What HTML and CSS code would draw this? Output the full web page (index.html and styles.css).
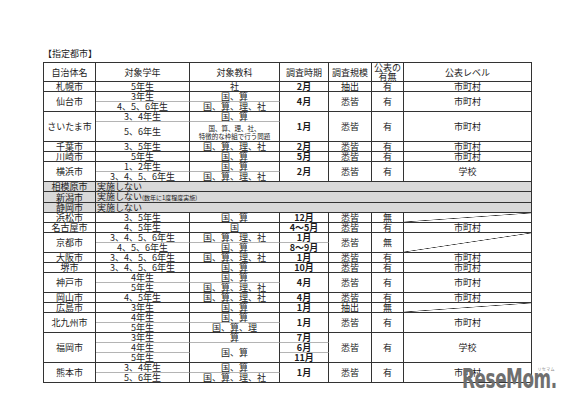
FILE: index.html
```html
<!DOCTYPE html>
<html lang="ja">
<head>
<meta charset="utf-8">
<link rel="stylesheet" href="styles.css">
</head>
<body>
<div class="page">
  <p class="title">【指定都市】</p>
  <table class="grid">
    <colgroup>
      <col class="c1"><col class="c2"><col class="c3"><col class="c4"><col class="c5"><col class="c6"><col class="c7">
    </colgroup>
    <tr class="head">
      <th>自治体名</th><th>対象学年</th><th>対象教科</th><th>調査時期</th><th>調査規模</th><th>公表の<br>有無</th><th>公表レベル</th>
    </tr>
    <tr><td>札幌市</td><td>5年生</td><td>社</td><td class="b">2月</td><td>抽出</td><td>有</td><td>市町村</td></tr>

    <tr><td rowspan="2">仙台市</td><td class="s">3年生</td><td class="s">国、算</td><td rowspan="2" class="b">4月</td><td rowspan="2">悉皆</td><td rowspan="2">有</td><td rowspan="2">市町村</td></tr>
    <tr><td>4、5、6年生</td><td>国、算、理、社</td></tr>

    <tr><td rowspan="2">さいたま市</td><td class="s">3、4年生</td><td class="s">国、算</td><td rowspan="2" class="b">1月</td><td rowspan="2">悉皆</td><td rowspan="2">有</td><td rowspan="2">市町村</td></tr>
    <tr class="tall"><td>5、6年生</td><td class="small">国、算、理、社、<br>特徴的な枠組で行う問題</td></tr>

    <tr><td>千葉市</td><td>3、5年生</td><td>国、算、理、社</td><td class="b">2月</td><td>悉皆</td><td>有</td><td>市町村</td></tr>
    <tr><td>川崎市</td><td>5年生</td><td>国、算</td><td class="b">5月</td><td>悉皆</td><td>有</td><td>市町村</td></tr>

    <tr><td rowspan="2">横浜市</td><td class="s">1、2年生</td><td class="s">国、算</td><td rowspan="2" class="b">2月</td><td rowspan="2">悉皆</td><td rowspan="2">有</td><td rowspan="2">学校</td></tr>
    <tr><td>3、4、5、6年生</td><td>国、算、理、社</td></tr>

    <tr class="gray"><td>相模原市</td><td colspan="6" class="left">実施しない</td></tr>
    <tr class="gray"><td>新潟市</td><td colspan="6" class="left">実施しない<span class="note">(数年に1度程度実施)</span></td></tr>
    <tr class="gray"><td>静岡市</td><td colspan="6" class="left">実施しない</td></tr>

    <tr><td>浜松市</td><td>3、5年生</td><td>国、算</td><td class="b">12月</td><td>悉皆</td><td>無</td><td class="diag"></td></tr>
    <tr><td>名古屋市</td><td>4、5年生</td><td>国</td><td class="b">4〜5月</td><td>悉皆</td><td>有</td><td>市町村</td></tr>

    <tr><td rowspan="2">京都市</td><td class="s">3、4、5、6年生</td><td class="s">国、算、理、社</td><td class="s b">1月</td><td rowspan="2">悉皆</td><td rowspan="2">無</td><td rowspan="2" class="diag"></td></tr>
    <tr><td>4、5、6年生</td><td>国、算</td><td class="b">8〜9月</td></tr>

    <tr><td>大阪市</td><td>3、4、5、6年生</td><td>国、算、理、社</td><td class="b">1月</td><td>悉皆</td><td>有</td><td>市町村</td></tr>
    <tr><td>堺市</td><td>3、4、5、6年生</td><td>国、算</td><td class="b">10月</td><td>悉皆</td><td>有</td><td>市町村</td></tr>

    <tr><td rowspan="2">神戸市</td><td class="s">4年生</td><td class="s">国、算</td><td rowspan="2" class="b">4月</td><td rowspan="2">悉皆</td><td rowspan="2">有</td><td rowspan="2">市町村</td></tr>
    <tr><td>5年生</td><td>国、算、理、社</td></tr>

    <tr><td>岡山市</td><td>4、5年生</td><td>国、算、理、社</td><td class="b">4月</td><td>悉皆</td><td>有</td><td>市町村</td></tr>
    <tr><td>広島市</td><td>3年生</td><td>国、算</td><td class="b">1月</td><td>抽出</td><td>無</td><td class="diag"></td></tr>

    <tr><td rowspan="2">北九州市</td><td class="s">4年生</td><td class="s">国、算</td><td rowspan="2" class="b">1月</td><td rowspan="2">悉皆</td><td rowspan="2">有</td><td rowspan="2">市町村</td></tr>
    <tr><td>5年生</td><td>国、算、理</td></tr>

    <tr><td rowspan="3">福岡市</td><td class="s">3年生</td><td class="s">算</td><td class="s b">7月</td><td rowspan="3">悉皆</td><td rowspan="3">有</td><td rowspan="3">学校</td></tr>
    <tr><td class="s">4年生</td><td rowspan="2">国、算</td><td class="s b">6月</td></tr>
    <tr><td>5年生</td><td class="b">11月</td></tr>

    <tr><td rowspan="2">熊本市</td><td class="s">3、4年生</td><td class="s">国、算</td><td rowspan="2" class="b">1月</td><td rowspan="2">悉皆</td><td rowspan="2">有</td><td rowspan="2">市町村</td></tr>
    <tr><td>5、6年生</td><td>国、算、理、社</td></tr>
  </table>
  <div class="logo"><span class="kana">リセマム</span><span class="word">ReseMom.</span></div>
</div>
</body>
</html>
```

FILE: styles.css
```css
html, body {
  margin: 0;
  background: #ffffff;
}

body {
  font-family: "Noto Sans CJK JP", "Noto Sans", sans-serif;
  color: #1c1c1c;
}

.page {
  position: relative;
  width: 572px;
  height: 405px;
  box-sizing: border-box;
  padding: 48px 0 0 43px;
}

.title {
  margin: 0;
  height: 14px;
  font-size: 9px;
  line-height: 12px;
}

.grid {
  border-collapse: separate;
  border-spacing: 0;
  table-layout: fixed;
  width: 489px;
  border-top: 1px solid #333;
  border-left: 1px solid #333;
}

.c1 { width: 52px; }
.c2 { width: 94px; }
.c3 { width: 90px; }
.c4 { width: 49px; }
.c5 { width: 43px; }
.c6 { width: 32px; }
.c7 { width: 128px; }

.grid th,
.grid td {
  box-sizing: border-box;
  height: 10px;
  padding: 0;
  border-right: 1px solid #333;
  border-bottom: 1px solid #333;
  font-size: 9px;
  line-height: 9px;
  font-weight: normal;
  text-align: center;
  vertical-align: middle;
  white-space: nowrap;
}

.grid .head th {
  height: 19px;
  line-height: 9px;
}

.grid .tall td {
  height: 20px;
}

.grid td.s {
  border-bottom-color: #b4b4b4;
}

.grid td.b {
  font-weight: bold;
}

.grid td.small {
  font-size: 6.5px;
  line-height: 8px;
}

.grid .gray td {
  background: #d9d9d9;
}

.grid td.left {
  text-align: left;
  padding-left: 1px;
}

.note {
  font-size: 6px;
}

.grid td.diag {
  background: linear-gradient(to bottom right, transparent calc(50% - 0.6px), #333 50%, transparent calc(50% + 0.6px));
}

.logo {
  position: absolute;
  left: 462px;
  top: 366px;
  width: 97px;
  height: 26px;
}

.word {
  display: block;
  font-family: "DejaVu Sans Condensed", "DejaVu Sans", sans-serif;
  font-weight: bold;
  font-size: 26px;
  line-height: 26px;
  letter-spacing: -0.6px;
  color: #6f6f6f;
  transform: scaleX(0.72);
  transform-origin: left top;
}

.kana {
  position: absolute;
  right: 4px;
  top: 1px;
  font-family: "Noto Sans CJK JP", sans-serif;
  font-size: 4px;
  line-height: 4px;
  letter-spacing: 0.4px;
  color: #888;
}
```
